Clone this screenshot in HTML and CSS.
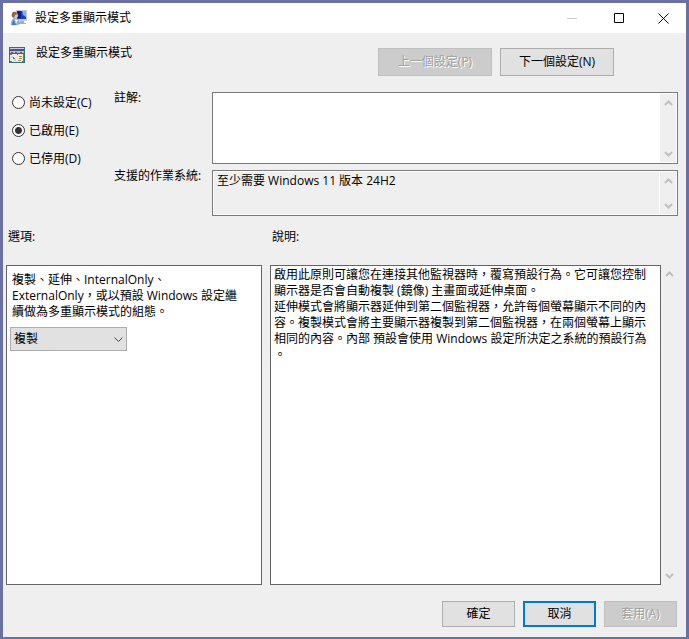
FILE: index.html
```html
<!DOCTYPE html>
<html lang="zh-Hant">
<head>
<meta charset="utf-8">
<title>設定多重顯示模式</title>
<link rel="stylesheet" href="styles.css">
</head>
<body>
<div class="window">
  <header class="titlebar">
    <svg class="icon" viewBox="0 0 16 16" aria-hidden="true">
      <path fill="#a9adb6" d="M9 11h4v2h2v1H8z"/>
      <path fill="#c6cad4" d="M5 0h11v11H5z"/>
      <path fill="#1a3fc4" d="M6 1h9v8H6z"/>
      <path fill="#0c1f9a" d="M6 1h4v7H6z"/>
      <path fill="#7fb0f4" d="M11 1h4v6l-3-2z"/>
      <path fill="#86add6" d="M0 15c0-4 1-7 4-7s5 3 5 6c-2 1-6 2-9 1z"/>
      <path fill="#4a7fb5" d="M1 13l2-3 2 5H1z"/>
      <path fill="#eef5fa" d="M4 9l3 1-2 4z"/>
      <circle cx="4.500" cy="5.500" r="2.500" fill="#e0c39a"/>
      <path fill="#8a6a45" d="M1 7c-1-4 1-6 4-5l2 2-3 1-1 3z"/>
    </svg>
    <h1 class="title">設定多重顯示模式</h1>
    <div class="caption">
      <button class="cap" type="button" aria-label="最小化" disabled><svg viewBox="0 0 11 11"><path d="M0 5.500h10" stroke="#ccc"/></svg></button>
      <button class="cap" type="button" aria-label="最大化"><svg viewBox="0 0 11 11"><path d="M1.500.5h9v9h-9z" fill="none" stroke="#000"/></svg></button>
      <button class="cap" type="button" aria-label="關閉"><svg viewBox="0 0 11 11"><path d="M.5.5l10 10M10.500.5l-10 10" fill="none" stroke="#000"/></svg></button>
    </div>
  </header>

  <section class="policy">
    <svg class="icon" viewBox="0 0 16 16" aria-hidden="true" shape-rendering="crispEdges">
      <path fill="#2d7373" d="M0 0h16v16H0z"/>
      <path fill="#c9cbd8" d="M1 1h14v1H1z"/>
      <path fill="#4a4f96" d="M1 2h14v2H1z"/>
      <path fill="#b9bcc0" d="M1 4h14v2H1z"/>
      <path fill="#5c6068" d="M2 5h2v1H2zM6 5h2v1H6zM11 5h2v1h-2z"/>
      <path fill="#6f7275" d="M1 7h14v8H1z"/>
      <path fill="#e9e9ee" d="M3 7h5v1h1v6H8v1H3v-1H1V8h2z"/>
      <path fill="#bfe0c8" d="M2 9h2v2H2z"/>
      <path fill="#d9c3e4" d="M5 12h2v2H5z"/>
      <path fill="#777" d="M4 10h2v2H4z"/>
      <path fill="#fff" d="M5 10h1v1H5z"/>
      <path fill="#f6eccb" d="M9 7h5v7h-1v1H8v-2h1z"/>
      <path fill="#a98a52" d="M10 9h3v1h-3zM10 11h3v1h-3zM9 13h3v1H9z"/>
    </svg>
    <h2 class="policy-name">設定多重顯示模式</h2>
    <div class="nav">
      <button class="btn wide" type="button" disabled>上一個設定(P)</button>
      <button class="btn wide" type="button">下一個設定(N)</button>
    </div>
  </section>

  <section class="settings">
    <fieldset class="states">
      <label class="state"><input type="radio" name="state">尚未設定(C)</label>
      <label class="state"><input type="radio" name="state" checked>已啟用(E)</label>
      <label class="state"><input type="radio" name="state">已停用(D)</label>
    </fieldset>
    <label class="field-label" for="comment">註解:</label>
    <div class="box comment">
      <textarea id="comment"></textarea>
      <div class="scroll"><svg viewBox="0 0 9 6"><path d="M1 5l3.500-3.500L8 5"/></svg><svg viewBox="0 0 9 6"><path d="M1 1l3.500 3.500L8 1"/></svg></div>
    </div>
    <label class="field-label" for="supported">支援的作業系統:</label>
    <div class="box supported">
      <textarea id="supported" readonly>至少需要 Windows 11 版本 24H2</textarea>
      <div class="scroll"><svg viewBox="0 0 9 6"><path d="M1 5l3.500-3.500L8 5"/></svg><svg viewBox="0 0 9 6"><path d="M1 1l3.500 3.500L8 1"/></svg></div>
    </div>
  </section>

  <main class="details">
    <section class="pane">
      <h3 class="pane-title">選項:</h3>
      <div class="panel options">
        <label class="option-label" for="mode">複製、延伸、InternalOnly、<br>ExternalOnly，或以預設 Windows 設定繼<br>續做為多重顯示模式的組態。</label>
        <div class="combo">
          <select id="mode"><option>複製</option></select>
          <svg viewBox="0 0 9 6" aria-hidden="true"><path d="M.5.5l4 4 4-4"/></svg>
        </div>
      </div>
    </section>
    <section class="pane">
      <h3 class="pane-title">說明:</h3>
      <div class="help">
        <p class="panel help-text">啟用此原則可讓您在連接其他監視器時，覆寫預設行為。它可讓您控制<br>顯示器是否會自動複製 (鏡像) 主畫面或延伸桌面。<br>延伸模式會將顯示器延伸到第二個監視器，允許每個螢幕顯示不同的內<br>容。複製模式會將主要顯示器複製到第二個監視器，在兩個螢幕上顯示<br>相同的內容。內部 預設會使用 Windows 設定所決定之系統的預設行為<br>。</p>
        <div class="scroll"><svg viewBox="0 0 9 6"><path d="M1 5l3.500-3.500L8 5"/></svg><svg viewBox="0 0 9 6"><path d="M1 1l3.500 3.500L8 1"/></svg></div>
      </div>
    </section>
  </main>

  <footer class="actions">
    <button class="btn" type="button">確定</button>
    <button class="btn default" type="button">取消</button>
    <button class="btn" type="button" disabled>套用(A)</button>
  </footer>
</div>
</body>
</html>
```

FILE: styles.css
```css
* { box-sizing: border-box; }

body {
  margin: 0;
  color: #000;
  font: 12px/16px "Open Sans", "Noto Sans CJK TC", sans-serif;
}

button, select, textarea { font: inherit; color: inherit; }
h1, h2, h3, p { margin: 0; font: inherit; }
svg { display: block; }

.window {
  display: flex;
  flex-direction: column;
  min-height: 100vh;
  border: solid #6b70a2;
  border-width: 3px 3px 2px;
  background: #efefef;
}

.icon { width: 16px; height: 16px; flex: none; }

.titlebar {
  display: flex;
  align-items: center;
  height: 30px;
  padding-left: 8px;
  gap: 8px;
  background: #fff;
}
.caption { display: flex; height: 100%; margin-left: auto; }
.cap {
  display: grid;
  place-items: center;
  width: 46px;
  padding: 0;
  border: 0;
  background: none;
}
.cap:last-child { width: 45px; }
.cap svg { width: 11px; height: 11px; }

.policy {
  display: flex;
  align-items: flex-start;
  padding: 15px 72px 16px 6px;
  gap: 11px;
}
.policy .icon { margin-top: -1px; }
.policy-name { margin-top: -3px; }
.nav { display: flex; gap: 8px; margin-left: auto; }

.btn {
  width: 73px;
  height: 26px;
  padding: 0;
  border: 1px solid #adadad;
  background: #e1e1e1;
}
.btn.wide { width: 114px; height: 28px; }
.btn.default { border: 2px solid #0078d7; }
.btn:disabled {
  border-color: #bfbfbf;
  background: #ccc;
  color: #a0a0a0;
  text-shadow: 1px 1px #fff;
}

.settings {
  display: grid;
  grid-template-columns: 105px 98px 1fr;
  row-gap: 6px;
  padding: 0 8px 0 6px;
}
.states {
  grid-row: span 2;
  display: flex;
  flex-direction: column;
  gap: 8px;
  margin: 0;
  padding: 0 0 0 3px;
  border: 0;
}
.state { display: flex; align-items: center; height: 21px; gap: 4px; white-space: nowrap; }
.states { gap: 7px; }
.state input {
  appearance: none;
  flex: none;
  width: 13px;
  height: 13px;
  margin: 0;
  border: 1px solid #333;
  border-radius: 50%;
  background: #fff;
}
.state input:checked { background: radial-gradient(circle, #333 3px, #fff 4px); }
.field-label { line-height: 12px; white-space: nowrap; }

.box {
  display: flex;
  padding: 1px;
  border: 1px solid #7a7a7a;
  background: #fff;
}
.comment { height: 72px; }
.supported { height: 46px; }
.box textarea {
  flex: 1;
  min-width: 0;
  padding: 1px 3px;
  border: 0;
  outline: 0;
  resize: none;
  overflow: hidden;
  background: #fff;
}
.supported textarea { background: #efefef; }
.supported .scroll { margin-left: 1px; }
.scroll {
  display: flex;
  flex: none;
  flex-direction: column;
  align-items: center;
  justify-content: space-between;
  width: 17px;
  padding: 6px 0;
  background: #efefef;
}
.box .scroll { width: 16px; padding: 6px 0 5px; }
.scroll svg { width: 9px; height: 6px; fill: none; stroke: #bfbfbf; stroke-width: 2; }

.details {
  flex: 1;
  display: grid;
  grid-template-columns: 256fr 408fr;
  gap: 8px;
  padding: 13px 8px 0 3px;
}
.pane { display: flex; flex-direction: column; gap: 20px; min-width: 0; }
.pane-title { padding-left: 2px; }
.panel { flex: 1; border: 1px solid #646464; background: #fff; white-space: nowrap; }
.options { padding: 6px 3px; }
.option-label { display: block; padding-left: 2px; }
.combo { position: relative; width: 117px; margin-top: 7px; }
.combo select {
  appearance: none;
  display: block;
  width: 100%;
  height: 24px;
  padding: 0 3px;
  border: 1px solid #adadad;
  border-radius: 0;
  background: #e1e1e1;
}
.combo svg {
  position: absolute;
  top: 10px;
  right: 4px;
  width: 9px;
  height: 6px;
  fill: none;
  stroke: #444;
  pointer-events: none;
}
.help { flex: 1; display: flex; }
.help-text { padding: 1px 3px; }

.actions {
  display: flex;
  justify-content: flex-end;
  gap: 8px;
  padding: 16px 9px 10px;
}
```
